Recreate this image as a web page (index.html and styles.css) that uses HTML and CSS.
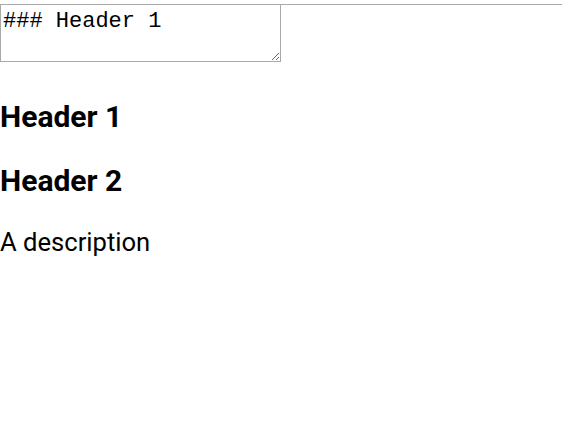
FILE: index.html
```html
<!DOCTYPE html>
<html>
<head>
<meta charset="utf-8">
<link rel="stylesheet" href="styles.css">
</head>
<body>
<div class="editor"><textarea class="source">### Header 1

### Header 2

A description</textarea></div>
<div class="preview">
<h3 class="heading">Header 1</h3>
<h3 class="heading">Header 2</h3>
<p class="text">A description</p>
</div>
</body>
</html>
```
FILE: styles.css
```css
html, body {
  margin: 0;
  padding: 0;
  background: #ffffff;
}
body {
  font-family: Roboto, "Liberation Sans", sans-serif;
  font-size: 24px;
  color: #000000;
}
.editor {
  margin-top: 4px;
  border-top: 1px solid #a9a9a9;
}
.source {
  display: block;
  box-sizing: border-box;
  width: 281px;
  height: 57px;
  margin: 0;
  padding: 4px 2px 2px 2px;
  border: 1px solid #a9a9a9;
  border-top: 0;
  font-family: "Liberation Mono", monospace;
  font-size: 22px;
  line-height: 25px;
  color: #000000;
  background: #ffffff;
  overflow: hidden;
  resize: both;
}
.preview {
  padding-top: 8px;
}
.heading {
  font-size: 30px;
  font-weight: 700;
  margin: 29px 0;
}
.text {
  font-size: 25.6px;
  margin: 27px 0;
}
```
